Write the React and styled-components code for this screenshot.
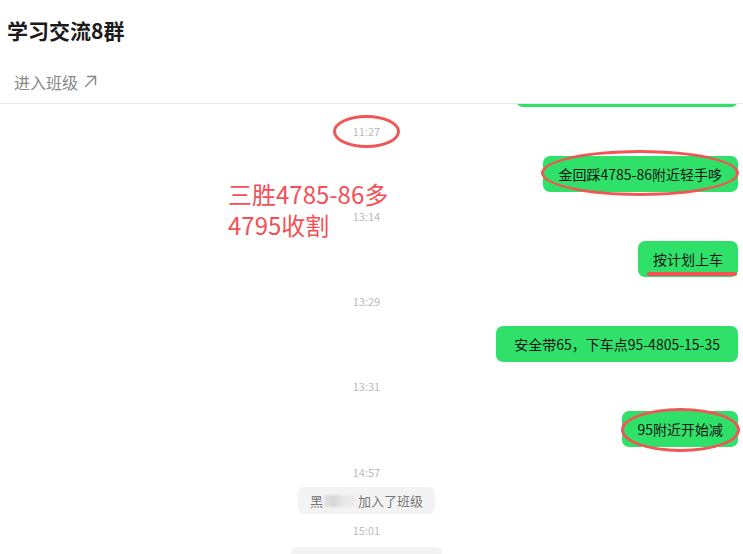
import React from 'react'
import styled, { createGlobalStyle } from 'styled-components'

const GlobalStyle = createGlobalStyle`
  html, body {
    margin: 0;
    padding: 0;
    background: #fff;
    font-family: "Microsoft YaHei", "Noto Sans CJK SC", "Noto Sans", sans-serif;
  }
`;

const Page = styled.div`
  display: flex;
  flex-direction: column;
  height: 100vh;
  overflow: hidden;
  background: #fff;
`;

const Title = styled.h1`
  margin: 0;
  padding: 15px 7px 0;
  font-size: 21px;
  line-height: 30px;
  font-weight: 700;
  color: #1b1b1b;
`;

const EnterRow = styled.div`
  display: flex;
  align-items: flex-end;
  gap: 6px;
  height: 59px;
  padding: 0 14px 10px;
  box-sizing: border-box;
  border-bottom: 1px solid #e6e6e6;
  color: #888;
  font-size: 16px;
  line-height: 22px;
  svg {
    margin-bottom: 5px;
  }
`;

const Chat = styled.div`
  position: relative;
  flex: 1;
  overflow: hidden;
  padding-right: 5px;
`;

const Row = styled.div`
  display: flex;
  justify-content: flex-end;
  margin-top: ${p => p.$pull || 0}px;
`;

const Bubble = styled.div`
  position: relative;
  background: #30e169;
  border-radius: 7px;
  padding: 8px ${p => p.$pad || 15}px;
  font-size: 14px;
  line-height: 20px;
  color: #151515;
  white-space: nowrap;
`;

const Time = styled.div`
  text-align: center;
  padding-right: 5px;
  margin: ${p => (p.$tight ? '9px 0 10px' : p.$before ? '18px 0 8px' : '17px 0 18px')};
  font-size: 11px;
  line-height: 14px;
  color: #bbb;
`;

const TimeText = styled.span`
  position: relative;
  display: inline-block;
`;

const Notice = styled.div`
  display: flex;
  justify-content: center;
  padding-right: 5px;
`;

const NoticeBox = styled.div`
  display: flex;
  align-items: center;
  height: 27px;
  padding: 0 ${p => p.$pad || 12}px;
  background: #f3f3f3;
  border-radius: 6px;
  font-size: 13px;
  color: #777;
  white-space: nowrap;
`;

const Blurred = styled.span`
  display: inline-block;
  width: 33px;
  height: 12px;
  margin: 0 1px;
  background: linear-gradient(90deg, #e4e4e4 0%, #d6d6d6 30%, #e8e8e8 60%, #efefef 100%);
  filter: blur(1px);
`;

const Ring = styled.i`
  position: absolute;
  top: ${p => p.$t}px;
  right: ${p => p.$r}px;
  bottom: ${p => p.$b}px;
  left: ${p => p.$l}px;
  border: 3px solid #f25555;
  border-radius: 50%;
  pointer-events: none;
`;

const Underline = styled.i`
  position: absolute;
  left: 9px;
  right: 1px;
  bottom: 1px;
  height: 4px;
  border-radius: 2px;
  background: #f25555;
`;

const Note = styled.div`
  position: absolute;
  top: 74px;
  left: 228px;
  font-size: 24px;
  line-height: 31px;
  color: #f44f55;
  white-space: nowrap;
`;

const OpenArrow = () => (
  <svg width="13" height="13" viewBox="0 0 13 13" fill="none" stroke="#888" strokeWidth="1.4" strokeLinecap="round" strokeLinejoin="round">
    <path d="M1.5 11.5 L11.5 1.5" />
    <path d="M3.5 1.5 H11.5 V9.5" />
  </svg>
)

export default function App() {
  return (
    <Page>
      <GlobalStyle />
      <Title>学习交流8群</Title>
      <EnterRow>
        进入班级
        <OpenArrow />
      </EnterRow>
      <Chat>
        <Note>
          三胜4785-86多<br />4795收割
        </Note>
        <Row $pull={-33}>
          <Bubble $pad={17}>空单4810附近进场，止损4825</Bubble>
        </Row>
        <Time>
          <TimeText>
            11:27
            <Ring $t={-9} $r={-20} $b={-10} $l={-20} />
          </TimeText>
        </Time>
        <Row>
          <Bubble $pad={16}>
            金回踩4785-86附近轻手哆
            <Ring $t={-6} $r={-1} $b={-4} $l={-2} />
          </Bubble>
        </Row>
        <Time>13:14</Time>
        <Row>
          <Bubble>
            按计划上车
            <Underline />
          </Bubble>
        </Row>
        <Time>13:29</Time>
        <Row>
          <Bubble $pad={18}>安全带65，下车点95-4805-15-35</Bubble>
        </Row>
        <Time>13:31</Time>
        <Row>
          <Bubble>
            95附近开始减
            <Ring $t={-3} $r={-2} $b={-5} $l={-1} />
          </Bubble>
        </Row>
        <Time $before>14:57</Time>
        <Notice>
          <NoticeBox>
            黑<Blurred />加入了班级
          </NoticeBox>
        </Notice>
        <Time $tight>15:01</Time>
        <Notice>
          <NoticeBox $pad={6}>黑仑骑士 被 赛大师 禁言</NoticeBox>
        </Notice>
      </Chat>
    </Page>
  )
}
